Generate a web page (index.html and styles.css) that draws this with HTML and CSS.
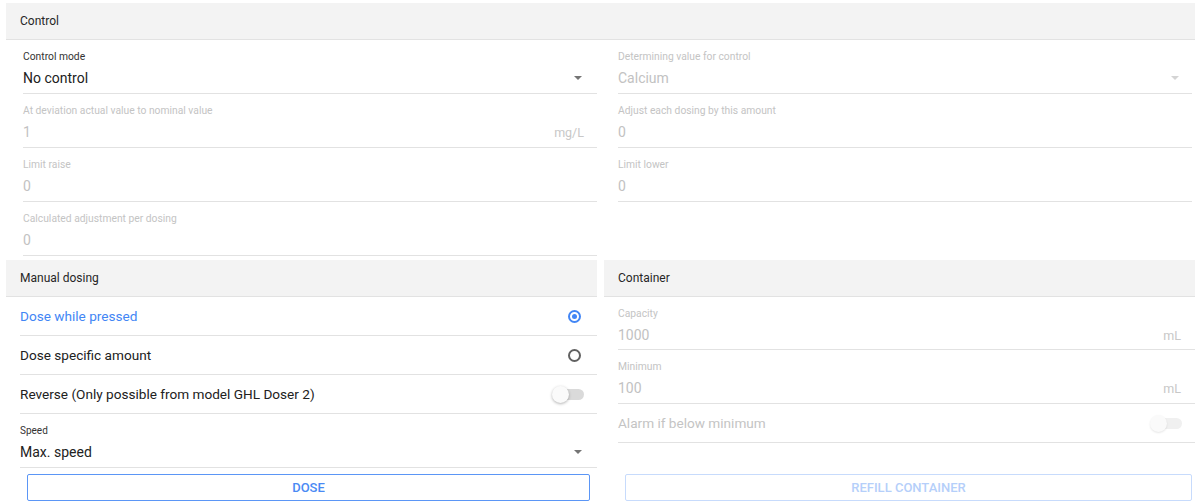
FILE: index.html
```html
<!DOCTYPE html>
<html lang="en">
<head>
    <meta charset="UTF-8">
    <title>Doser settings</title>
    <link rel="stylesheet" href="styles.css">
</head>
<body>
    <div class="page">
        <section class="panel">
            <div class="panel-head">Control</div>
            <div class="control-body">
                <div class="col">
                    <div class="field">
                        <label>Control mode</label>
                        <div class="value">No control <span class="caret"></span></div>
                    </div>
                    <div class="field off">
                        <label>At deviation actual value to nominal value</label>
                        <div class="value">1 <span class="unit">mg/L</span></div>
                    </div>
                    <div class="field off">
                        <label>Limit raise</label>
                        <div class="value">0</div>
                    </div>
                    <div class="field off">
                        <label>Calculated adjustment per dosing</label>
                        <div class="value">0</div>
                    </div>
                </div>
                <div class="col">
                    <div class="field off">
                        <label>Determining value for control</label>
                        <div class="value">Calcium <span class="caret"></span></div>
                    </div>
                    <div class="field off">
                        <label>Adjust each dosing by this amount</label>
                        <div class="value">0</div>
                    </div>
                    <div class="field off">
                        <label>Limit lower</label>
                        <div class="value">0</div>
                    </div>
                </div>
            </div>
        </section>

        <div class="bottom">
            <section class="panel manual">
                <div class="panel-head">Manual dosing</div>
                <div class="rows">
                    <div class="opt active">Dose while pressed <span class="radio checked"></span></div>
                    <div class="opt">Dose specific amount <span class="radio"></span></div>
                    <div class="opt">Reverse (Only possible from model GHL Doser 2) <span class="toggle"></span></div>
                    <div class="field">
                        <label>Speed</label>
                        <div class="value">Max. speed <span class="caret"></span></div>
                    </div>
                </div>
                <button class="btn">DOSE</button>
            </section>

            <section class="panel container">
                <div class="panel-head">Container</div>
                <div class="rows">
                    <div class="field off">
                        <label>Capacity</label>
                        <div class="value">1000 <span class="unit">mL</span></div>
                    </div>
                    <div class="field off">
                        <label>Minimum</label>
                        <div class="value">100 <span class="unit">mL</span></div>
                    </div>
                    <div class="opt off">Alarm if below minimum <span class="toggle"></span></div>
                </div>
                <button class="btn" disabled>REFILL CONTAINER</button>
            </section>
        </div>
    </div>
</body>
</html>
```

FILE: styles.css
```css
* {
    margin: 0;
    padding: 0;
    box-sizing: border-box;
}

body {
    font-family: Roboto, 'Liberation Sans', sans-serif;
    background: #fff;
    color: #212121;
}

.page {
    padding: 3px 5px 0 6px;
}

.panel-head {
    height: 37px;
    padding: 0 14px;
    display: flex;
    align-items: center;
    background: #f3f3f3;
    border-bottom: 1px solid #e2e2e2;
    font-size: 12px;
    color: #262626;
}

.control-body {
    display: grid;
    grid-template-columns: 1fr 1fr;
    gap: 21px;
    padding: 0 3px 0 17px;
    margin-bottom: 4px;
}

/* text field / select */
.field {
    height: 54px;
    padding: 11px 13px 0 0;
    border-bottom: 1px solid #e2e2e2;
}

.field label {
    display: block;
    height: 12px;
    line-height: 12px;
    font-size: 10.3px;
    color: #333;
}

.field .value {
    display: flex;
    justify-content: space-between;
    align-items: center;
    margin-top: 5px;
    height: 20px;
    font-size: 14px;
    color: #212121;
}

.field.off label {
    color: #c4c4c4;
}

.field.off .value {
    color: #c2c2c2;
}

.unit {
    font-size: 12.5px;
    color: #c8c8c8;
}

.caret {
    width: 0;
    height: 0;
    margin-right: 2px;
    border-left: 4px solid transparent;
    border-right: 4px solid transparent;
    border-top: 4px solid #757575;
}

.field.off .caret {
    border-top-color: #d4d4d4;
    margin-right: 0;
}

.bottom {
    display: grid;
    grid-template-columns: 1fr 1fr;
    gap: 7px;
}

.manual,
.container {
    display: flex;
    flex-direction: column;
}

.rows {
    margin-left: 14px;
}

.opt {
    height: 39px;
    display: flex;
    justify-content: space-between;
    align-items: center;
    border-bottom: 1px solid #e2e2e2;
    font-size: 13.6px;
    color: #212121;
}

.opt.active {
    color: #4286f5;
}

.opt.off {
    color: #c4c4c4;
}

.radio {
    width: 13px;
    height: 13px;
    margin-right: 16px;
    border: 2px solid #616161;
    border-radius: 50%;
    display: flex;
    align-items: center;
    justify-content: center;
}

.radio.checked {
    border-color: #4286f5;
}

.radio.checked::after {
    content: "";
    width: 5px;
    height: 5px;
    border-radius: 50%;
    background: #4286f5;
}

.toggle {
    position: relative;
    width: 28px;
    height: 11px;
    margin-right: 13px;
    border-radius: 6px;
    background: #dadada;
}

.toggle::before {
    content: "";
    position: absolute;
    left: -4px;
    top: -3px;
    width: 17px;
    height: 17px;
    border-radius: 50%;
    background: #fafafa;
    box-shadow: 0 1px 3px rgba(0, 0, 0, 0.3);
}

.opt.off .toggle {
    background: #f0f0f0;
}

.opt.off .toggle::before {
    box-shadow: 0 1px 2px rgba(0, 0, 0, 0.1);
}

.btn {
    display: block;
    width: calc(100% - 28px);
    height: 27px;
    margin: auto 7px 0 21px;
    background: #fff;
    border: 1px solid #5b96f6;
    border-radius: 2px;
    font-family: inherit;
    font-size: 13px;
    font-weight: 500;
    color: #4a8af4;
}

.btn:disabled {
    border-color: #c7dbfc;
    color: #b5cffa;
}

.manual .btn {
    margin-top: 6px;
}

.manual .field label {
    font-size: 10px;
}

.container .field {
    padding-right: 14px;
}

.container .field:first-child {
    height: 53px;
}

.container .btn {
    width: calc(100% - 24px);
    margin-right: 3px;
}
```
